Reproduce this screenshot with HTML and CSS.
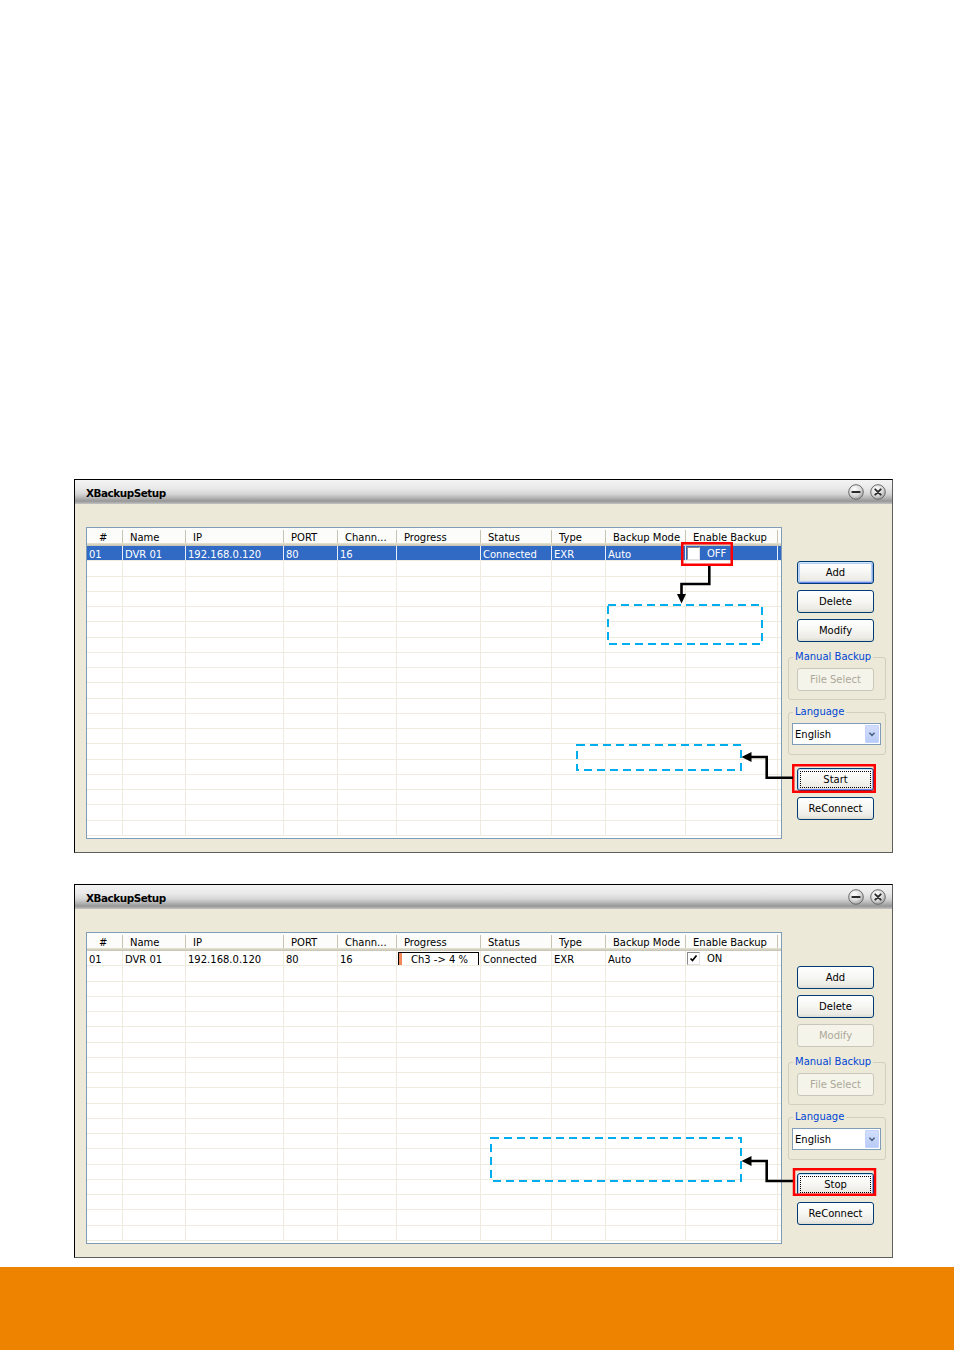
FILE: index.html
```html
<!DOCTYPE html>
<html lang="en">
<head>
<meta charset="utf-8">
<title>XBackupSetup</title>
<link rel="stylesheet" href="styles.css">
</head>
<body>
<div class="page">

  <section class="win">
    <div class="titlebar">
      <span class="title">XBackupSetup</span>
      <span class="ctrls">
        <svg class="cbtn" viewBox="0 0 16 16"><defs><radialGradient id="rg" cx="40%" cy="30%" r="75%"><stop offset="0" stop-color="#ffffff"/><stop offset="0.6" stop-color="#d8d8d8"/><stop offset="1" stop-color="#9a9a9a"/></radialGradient></defs><circle cx="8" cy="8" r="7.3" fill="url(#rg)" stroke="#6a6a6a"/><path d="M4.4 8h7.2" stroke="#2a2a2a" stroke-width="2.2" stroke-linecap="round"/></svg>
        <svg class="cbtn" viewBox="0 0 16 16"><circle cx="8" cy="8" r="7.3" fill="url(#rg)" stroke="#6a6a6a"/><path d="M5.3 5.3l5.4 5.4M10.7 5.3l-5.4 5.4" stroke="#2a2a2a" stroke-width="1.9" stroke-linecap="round"/></svg>
      </span>
    </div>
    <div class="wbody">
      <div class="list">
        <div class="hdr">
          <span class="hnum">#</span><span>Name</span><span>IP</span><span>PORT</span><span>Chann...</span><span>Progress</span><span>Status</span><span>Type</span><span>Backup Mode</span><span>Enable Backup</span>
        </div>
        <div class="rows">
          <div class="r sel"><span>01</span><span>DVR 01</span><span>192.168.0.120</span><span>80</span><span>16</span><span></span><span>Connected</span><span>EXR</span><span>Auto</span><span class="en"><b class="cb"></b>OFF</span></div>
          <div class="r"><span></span><span></span><span></span><span></span><span></span><span></span><span></span><span></span><span></span><span></span></div>
          <div class="r"><span></span><span></span><span></span><span></span><span></span><span></span><span></span><span></span><span></span><span></span></div>
          <div class="r"><span></span><span></span><span></span><span></span><span></span><span></span><span></span><span></span><span></span><span></span></div>
          <div class="r"><span></span><span></span><span></span><span></span><span></span><span></span><span></span><span></span><span></span><span></span></div>
          <div class="r"><span></span><span></span><span></span><span></span><span></span><span></span><span></span><span></span><span></span><span></span></div>
          <div class="r"><span></span><span></span><span></span><span></span><span></span><span></span><span></span><span></span><span></span><span></span></div>
          <div class="r"><span></span><span></span><span></span><span></span><span></span><span></span><span></span><span></span><span></span><span></span></div>
          <div class="r"><span></span><span></span><span></span><span></span><span></span><span></span><span></span><span></span><span></span><span></span></div>
          <div class="r"><span></span><span></span><span></span><span></span><span></span><span></span><span></span><span></span><span></span><span></span></div>
          <div class="r"><span></span><span></span><span></span><span></span><span></span><span></span><span></span><span></span><span></span><span></span></div>
          <div class="r"><span></span><span></span><span></span><span></span><span></span><span></span><span></span><span></span><span></span><span></span></div>
          <div class="r"><span></span><span></span><span></span><span></span><span></span><span></span><span></span><span></span><span></span><span></span></div>
          <div class="r"><span></span><span></span><span></span><span></span><span></span><span></span><span></span><span></span><span></span><span></span></div>
          <div class="r"><span></span><span></span><span></span><span></span><span></span><span></span><span></span><span></span><span></span><span></span></div>
          <div class="r"><span></span><span></span><span></span><span></span><span></span><span></span><span></span><span></span><span></span><span></span></div>
          <div class="r"><span></span><span></span><span></span><span></span><span></span><span></span><span></span><span></span><span></span><span></span></div>
          <div class="r"><span></span><span></span><span></span><span></span><span></span><span></span><span></span><span></span><span></span><span></span></div>
          <div class="r"><span></span><span></span><span></span><span></span><span></span><span></span><span></span><span></span><span></span><span></span></div>
        </div>
      </div>
      <div class="side">
        <button class="btn btn-first default">Add</button>
        <button class="btn">Delete</button>
        <button class="btn">Modify</button>
        <fieldset class="grp grp-manual">
          <legend>Manual Backup</legend>
          <button class="btn dis">File Select</button>
        </fieldset>
        <fieldset class="grp grp-lang">
          <legend>Language</legend>
          <div class="combo"><span class="ctext">English</span><span class="drop"><svg viewBox="0 0 14 17"><path d="M4 7l3 3 3-3" fill="none" stroke="#4d6185" stroke-width="1.8"/></svg></span></div>
        </fieldset>
        <button class="btn btn-go focus">Start</button>
        <button class="btn">ReConnect</button>
      </div>
    </div>
    <svg class="annot" viewBox="0 0 819 374">
      <rect x="608.25" y="64.25" width="49.5" height="21.5" fill="none" stroke="#ff0000" stroke-width="2.5"/>
      <polyline points="635.3,87 635.3,105 607.5,105 607.5,117" fill="none" stroke="#000" stroke-width="2.6"/>
      <polygon points="603,115 612,115 607.5,124.5" fill="#000"/>
      <rect x="534" y="126" width="154" height="39" fill="none" stroke="#00aeef" stroke-width="2" stroke-dasharray="8 5"/>
      <rect x="719.25" y="286.25" width="81.5" height="26.5" fill="none" stroke="#ff0000" stroke-width="2.5"/>
      <polyline points="719,298.7 692.7,298.7 692.7,278 676,278" fill="none" stroke="#000" stroke-width="2.6"/>
      <polygon points="667.5,278 677.5,273 677.5,283" fill="#000"/>
      <rect x="503" y="266" width="164" height="25" fill="none" stroke="#00aeef" stroke-width="2" stroke-dasharray="8 5"/>
    </svg>
  </section>

  <section class="win">
    <div class="titlebar">
      <span class="title">XBackupSetup</span>
      <span class="ctrls">
        <svg class="cbtn" viewBox="0 0 16 16"><circle cx="8" cy="8" r="7.3" fill="url(#rg)" stroke="#6a6a6a"/><path d="M4.4 8h7.2" stroke="#2a2a2a" stroke-width="2.2" stroke-linecap="round"/></svg>
        <svg class="cbtn" viewBox="0 0 16 16"><circle cx="8" cy="8" r="7.3" fill="url(#rg)" stroke="#6a6a6a"/><path d="M5.3 5.3l5.4 5.4M10.7 5.3l-5.4 5.4" stroke="#2a2a2a" stroke-width="1.9" stroke-linecap="round"/></svg>
      </span>
    </div>
    <div class="wbody">
      <div class="list">
        <div class="hdr">
          <span class="hnum">#</span><span>Name</span><span>IP</span><span>PORT</span><span>Chann...</span><span>Progress</span><span>Status</span><span>Type</span><span>Backup Mode</span><span>Enable Backup</span>
        </div>
        <div class="rows">
          <div class="r"><span>01</span><span>DVR 01</span><span>192.168.0.120</span><span>80</span><span>16</span><span class="prog"><span class="pbox"><span class="pfill"></span>Ch3 -&gt; 4 %</span></span><span>Connected</span><span>EXR</span><span>Auto</span><span class="en"><b class="cb on"><svg viewBox="0 0 9 9"><path d="M1.5 4.5l2 2 4-5" fill="none" stroke="#000" stroke-width="1.7"/></svg></b>ON</span></div>
          <div class="r"><span></span><span></span><span></span><span></span><span></span><span></span><span></span><span></span><span></span><span></span></div>
          <div class="r"><span></span><span></span><span></span><span></span><span></span><span></span><span></span><span></span><span></span><span></span></div>
          <div class="r"><span></span><span></span><span></span><span></span><span></span><span></span><span></span><span></span><span></span><span></span></div>
          <div class="r"><span></span><span></span><span></span><span></span><span></span><span></span><span></span><span></span><span></span><span></span></div>
          <div class="r"><span></span><span></span><span></span><span></span><span></span><span></span><span></span><span></span><span></span><span></span></div>
          <div class="r"><span></span><span></span><span></span><span></span><span></span><span></span><span></span><span></span><span></span><span></span></div>
          <div class="r"><span></span><span></span><span></span><span></span><span></span><span></span><span></span><span></span><span></span><span></span></div>
          <div class="r"><span></span><span></span><span></span><span></span><span></span><span></span><span></span><span></span><span></span><span></span></div>
          <div class="r"><span></span><span></span><span></span><span></span><span></span><span></span><span></span><span></span><span></span><span></span></div>
          <div class="r"><span></span><span></span><span></span><span></span><span></span><span></span><span></span><span></span><span></span><span></span></div>
          <div class="r"><span></span><span></span><span></span><span></span><span></span><span></span><span></span><span></span><span></span><span></span></div>
          <div class="r"><span></span><span></span><span></span><span></span><span></span><span></span><span></span><span></span><span></span><span></span></div>
          <div class="r"><span></span><span></span><span></span><span></span><span></span><span></span><span></span><span></span><span></span><span></span></div>
          <div class="r"><span></span><span></span><span></span><span></span><span></span><span></span><span></span><span></span><span></span><span></span></div>
          <div class="r"><span></span><span></span><span></span><span></span><span></span><span></span><span></span><span></span><span></span><span></span></div>
          <div class="r"><span></span><span></span><span></span><span></span><span></span><span></span><span></span><span></span><span></span><span></span></div>
          <div class="r"><span></span><span></span><span></span><span></span><span></span><span></span><span></span><span></span><span></span><span></span></div>
          <div class="r"><span></span><span></span><span></span><span></span><span></span><span></span><span></span><span></span><span></span><span></span></div>
        </div>
      </div>
      <div class="side">
        <button class="btn btn-first">Add</button>
        <button class="btn">Delete</button>
        <button class="btn dis">Modify</button>
        <fieldset class="grp grp-manual">
          <legend>Manual Backup</legend>
          <button class="btn dis">File Select</button>
        </fieldset>
        <fieldset class="grp grp-lang">
          <legend>Language</legend>
          <div class="combo"><span class="ctext">English</span><span class="drop"><svg viewBox="0 0 14 17"><path d="M4 7l3 3 3-3" fill="none" stroke="#4d6185" stroke-width="1.8"/></svg></span></div>
        </fieldset>
        <button class="btn btn-go focus">Stop</button>
        <button class="btn">ReConnect</button>
      </div>
    </div>
    <svg class="annot" viewBox="0 0 819 374">
      <rect x="417" y="254" width="250" height="43" fill="none" stroke="#00aeef" stroke-width="2" stroke-dasharray="8 5"/>
      <polyline points="719,297 692.7,297 692.7,277 676,277" fill="none" stroke="#000" stroke-width="2.6"/>
      <polygon points="667.5,277 677.5,272 677.5,282" fill="#000"/>
      <rect x="720" y="285.25" width="81" height="25.5" fill="none" stroke="#ff0000" stroke-width="2.5"/>
    </svg>
  </section>

</div>
<div class="band"></div>
</body>
</html>
```

FILE: styles.css
```css
* { box-sizing: border-box; }
html, body { margin: 0; background: #ffffff; }
body {
  font-family: "DejaVu Sans", Tahoma, sans-serif;
  font-size: 10px;
  line-height: 12px;
  color: #000;
}

.page { padding-top: 479px; }

.win {
  position: relative;
  margin-left: 74px;
  width: 819px;
  height: 374px;
  background: #ECE9D8;
  border: 1px solid #000;
  border-right-color: #5e5e5e;
  border-bottom-color: #5e5e5e;
  display: flex;
  flex-direction: column;
}
.win + .win { margin-top: 31px; }

.titlebar {
  height: 24px;
  flex: none;
  display: flex;
  align-items: center;
  justify-content: space-between;
  padding: 0 6px 0 11px;
  background: linear-gradient(#f4f4f4 0%, #e9e9e9 35%, #d6d6d6 58%, #b4b4b4 75%, #969696 88%, #c4c4c4 100%);
}
.title {
  font-weight: bold;
  font-size: 10.4px;
  letter-spacing: -0.45px;
  margin-top: 1px;
}
.ctrls { display: flex; gap: 6px; }
.cbtn { width: 16px; height: 16px; display: block; }

.wbody {
  display: flex;
  align-items: flex-start;
  padding: 23px 0 0 11px;
}

.list {
  --cols: 36px 63px 98px 54px 59px 84px 71px 54px 80px 92px;
  width: 696px;
  height: 312px;
  border: 1px solid #7F9DB9;
  background: #fff;
  overflow: hidden;
  flex: none;
}

.hdr {
  display: grid;
  grid-template-columns: var(--cols);
  height: 18px;
  background: #fcfcfa;
  box-shadow: inset 0 -1px 0 #cbc7b8, inset 0 -2px 0 #d6d2c2, inset 0 -3px 0 #e2decd;
}
.hdr span {
  padding: 4px 0 0 7px;
  white-space: nowrap;
  overflow: hidden;
  border-right: 1px solid;
  border-image: linear-gradient(transparent 3px, #c7c5b2 3px, #c7c5b2 14px, transparent 14px) 1;
}
.hdr .hnum { padding-left: 12px; }

.rows { display: flex; flex-direction: column; }
.r {
  display: grid;
  grid-template-columns: var(--cols);
  height: 15.25px;
  border-bottom: 1px solid #efebdf;
}
.r > span {
  border-right: 1px solid #efebdf;
  padding: 3px 0 0 2px;
  white-space: nowrap;
  overflow: hidden;
  line-height: 12px;
}
.r.sel { background: #316AC5; color: #fff; }
.r.sel > span { border-right-color: #e8eef8; }

.en { display: flex; align-items: center; }
.r > span.en { padding: 1px 0 0 1px; }
.cb {
  width: 13px;
  height: 13px;
  flex: none;
  margin-right: 7px;
  margin-top: -1px;
  background: #fff;
  border-left: 1px solid #8a8a8a;
  border-top: 1px solid #8a8a8a;
  border-right: 1px solid #e2e2e2;
  border-bottom: 1px solid #e2e2e2;
  display: flex;
  align-items: center;
  justify-content: center;
}
.cb svg { width: 9px; height: 9px; display: block; }

.r > span.prog { padding: 1px 1px 0 1px; }
.pbox {
  display: flex;
  align-items: center;
  justify-content: center;
  position: relative;
  height: 14px;
  border: 1px solid #000;
  background: #fff;
  padding: 1px 0 0 2px;
}
.pfill {
  position: absolute;
  left: 0;
  top: 0;
  bottom: 0;
  width: 3px;
  background: #f0885a;
}

.side {
  width: 98px;
  margin-left: 6px;
  display: flex;
  flex-direction: column;
  align-items: flex-start;
}

.btn {
  width: 77px;
  height: 23px;
  margin: 6px 0 0 9px;
  padding: 1px 0 0 0;
  border: 1px solid #003C74;
  border-radius: 3px;
  background: linear-gradient(#ffffff 0%, #f7f7f4 45%, #ecebe5 85%, #dcdbd3 100%);
  font: inherit;
  color: #000;
  display: flex;
  align-items: center;
  justify-content: center;
}
.btn-first { margin-top: 34px; }
.btn.default {
  box-shadow: inset 0 1px 0 #cee7ff, inset 1px 0 0 #bcd4f6, inset -1px 0 0 #89ade4, inset 0 -1px 0 #6982ee, inset 0 0 0 2px #b6cdf6;
}
.btn.focus {
  box-shadow: inset 0 1px 0 #cee7ff, inset 1px 0 0 #bcd4f6, inset -1px 0 0 #89ade4, inset 0 -1px 0 #6982ee;
  outline: 1px dotted #000;
  outline-offset: -4px;
}
.btn.dis {
  border-color: #c9c7ba;
  background: #f5f4ea;
  color: #aca899;
}
.btn-go { margin-top: 13px; }

.grp {
  width: 98px;
  min-width: 0;
  margin: 9px 0 0 0;
  border: 1px solid #d0d0bf;
  border-radius: 3px;
  padding: 5px 0 8px 4px;
}
.grp legend {
  color: #0046D5;
  padding: 0 2px;
  line-height: 12px;
}
.grp .btn { margin: 0 0 0 4px; }
.grp-lang { margin-top: 6px; padding: 5px 0 9px 3px; }
.grp-lang legend { margin-left: 1px; }

.combo {
  width: 89px;
  height: 22px;
  border: 1px solid #7F9DB9;
  background: #fff;
  display: flex;
  align-items: center;
  justify-content: space-between;
  padding: 1px 1px 1px 2px;
}
.ctext { padding-top: 2px; }
.drop {
  width: 14px;
  height: 18px;
  background: linear-gradient(#d2defb, #b9cbf7);
  border: 1px solid #c3d3fd;
  border-radius: 1px;
}
.drop svg { width: 12px; height: 16px; display: block; }

.annot {
  position: absolute;
  left: -1px;
  top: -1px;
  width: 819px;
  height: 374px;
  pointer-events: none;
  overflow: visible;
}

.band {
  margin-top: 9px;
  height: 83px;
  background: #EE8300;
}
```
